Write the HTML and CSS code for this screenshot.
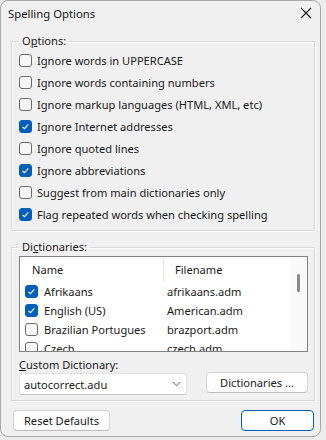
FILE: index.html
```html
<!DOCTYPE html>
<html lang="en">
<head>
    <meta charset="UTF-8">
    <title>Spelling Options</title>
    <link rel="stylesheet" href="styles.css">
</head>
<body>
    <div class="window">
        <div class="titlebar">
            <span class="title">Spelling Options</span>
            <svg class="close" width="12" height="12" viewBox="0 0 12 12">
                <path d="M1 1 L11 11 M11 1 L1 11" stroke="#1a1a1a" stroke-width="1.1" fill="none"/>
            </svg>
        </div>
        <div class="content">
            <fieldset class="group options">
                <legend>O<u>p</u>tions:</legend>
                <label class="opt"><span class="box"></span>Ignore words in UPPERCASE</label>
                <label class="opt"><span class="box"></span>Ignore words containing numbers</label>
                <label class="opt"><span class="box"></span>Ignore markup languages (HTML, XML, etc)</label>
                <label class="opt"><span class="box checked"></span>Ignore Internet addresses</label>
                <label class="opt"><span class="box"></span>Ignore quoted lines</label>
                <label class="opt"><span class="box checked"></span>Ignore abbreviations</label>
                <label class="opt"><span class="box"></span>Suggest from main dictionaries only</label>
                <label class="opt"><span class="box checked"></span>Flag repeated words when checking spelling</label>
            </fieldset>

            <fieldset class="group dictionaries">
                <legend>Di<u>c</u>tionaries:</legend>
                <div class="list">
                    <div class="list-body">
                        <div class="list-head">
                            <div class="col-name">Name</div>
                            <div class="col-file">Filename</div>
                        </div>
                        <div class="list-row">
                            <div class="col-name"><span class="box checked"></span>Afrikaans</div>
                            <div class="col-file">afrikaans.adm</div>
                        </div>
                        <div class="list-row">
                            <div class="col-name"><span class="box checked"></span>English (US)</div>
                            <div class="col-file">American.adm</div>
                        </div>
                        <div class="list-row">
                            <div class="col-name"><span class="box"></span>Brazilian Portugues</div>
                            <div class="col-file">brazport.adm</div>
                        </div>
                        <div class="list-row">
                            <div class="col-name"><span class="box"></span>Czech</div>
                            <div class="col-file">czech.adm</div>
                        </div>
                    </div>
                    <div class="scrollbar"><span class="thumb"></span></div>
                </div>

                <div class="custom-row">
                    <div class="custom-col">
                        <div class="custom-label"><u>C</u>ustom Dictionary:</div>
                        <div class="combo">
                            <span>autocorrect.adu</span>
                            <svg width="9" height="6" viewBox="0 0 9 6">
                                <path d="M0.5 0.8 L4.5 4.8 L8.5 0.8" stroke="#6a6a6a" stroke-width="1" fill="none"/>
                            </svg>
                        </div>
                    </div>
                    <button class="btn dict-btn">Dictionaries ...</button>
                </div>
            </fieldset>

            <div class="footer">
                <button class="btn reset-btn">Reset Defaults</button>
                <button class="btn ok-btn">OK</button>
            </div>
        </div>
    </div>
</body>
</html>
```

FILE: styles.css
```css
body {
    margin: 0;
    background: #ececec;
    font-family: "Noto Sans", "Open Sans", sans-serif;
    font-size: 11.1px;
    color: #1a1a1a;
}

.window {
    width: 321px;
    height: 437px;
    box-sizing: border-box;
    border: 1px solid #a8a8a8;
    border-radius: 8px;
    background: #f0f0f0;
    overflow: hidden;
}

.titlebar {
    height: 32px;
    display: flex;
    align-items: center;
    justify-content: space-between;
    padding: 0 7px 0 7px;
    margin-top: -4px;
    margin-bottom: 4px;
    font-size: 11.3px;
}

.close {
    margin-right: 1px;
}

.content {
    padding: 0 6px 0 10px;
}

.group {
    margin: 0;
    width: 304px;
    box-sizing: border-box;
    border: 1px solid #d9d9d9;
    box-shadow: inset 1px 1px 0 #fbfbfb, 1px 1px 0 #fbfbfb;
    padding: 0 6px 5px 7px;
    min-inline-size: 0;
}

.group legend {
    padding: 0 3px;
    line-height: 16px;
}

.opt {
    display: flex;
    align-items: center;
    height: 22px;
}

.box {
    width: 13px;
    height: 13px;
    box-sizing: border-box;
    border: 1px solid #6b6b6b;
    border-radius: 3px;
    background: #f7f7f7;
    margin-right: 5px;
    flex-shrink: 0;
}

.box.checked {
    border-color: #005fb8;
    background: #005fb8 url("data:image/svg+xml,%3Csvg xmlns='http://www.w3.org/2000/svg' width='11' height='11' viewBox='0 0 11 11'%3E%3Cpath d='M2.5 5.8 L4.5 7.7 L8.3 3.4' stroke='white' stroke-width='1.1' fill='none'/%3E%3C/svg%3E") center no-repeat;
}

.dictionaries {
    margin-top: 8px;
    padding-top: 1px;
}

.list {
    display: flex;
    height: 96px;
    box-sizing: border-box;
    border: 1px solid #828282;
    background: #fff;
    overflow: hidden;
}

.list-body {
    flex: 1;
}

.list-head {
    display: flex;
    height: 25px;
    align-items: center;
}

.list-head .col-name {
    width: 131px;
    padding-left: 12px;
    border-right: 1px solid #e5e5e5;
    height: 23px;
    line-height: 23px;
}

.list-head .col-file {
    padding-left: 11px;
}

.list-row {
    display: flex;
    height: 19px;
    align-items: center;
}

.list-row .col-name {
    width: 138px;
    padding-left: 5px;
    display: flex;
    align-items: center;
}

.list-row .col-name .box {
    margin-right: 6px;
}

.list-row .col-file {
    padding-left: 4px;
}

.scrollbar {
    width: 17px;
    background: #f9f9f9;
    display: flex;
    justify-content: center;
    padding-top: 17px;
    box-sizing: border-box;
}

.thumb {
    width: 3px;
    height: 18px;
    border-radius: 2px;
    background: #8a8a8a;
}

.custom-row {
    display: flex;
    align-items: flex-end;
    margin-top: 5px;
}

.custom-label {
    line-height: 16px;
}

.combo {
    width: 168px;
    height: 22px;
    box-sizing: border-box;
    border: 1px solid #e0e0e0;
    border-bottom-color: #c8c8c8;
    border-radius: 3px;
    background: #fff;
    display: flex;
    align-items: center;
    justify-content: space-between;
    padding: 0 5px 0 4px;
}

.btn {
    font-family: inherit;
    font-size: 11.1px;
    color: #1a1a1a;
    background: #fdfdfd;
    border: 1px solid #d3d3d3;
    border-bottom-color: #bcbcbc;
    border-radius: 4px;
    height: 21px;
    padding: 0;
    cursor: pointer;
}

.dict-btn {
    width: 102px;
    margin-left: auto;
    margin-bottom: 2px;
}

.footer {
    display: flex;
    justify-content: space-between;
    margin-top: 9px;
    padding-left: 2px;
}

.reset-btn {
    width: 97px;
}

.ok-btn {
    width: 73px;
    border-color: #005fb8;
}
```
